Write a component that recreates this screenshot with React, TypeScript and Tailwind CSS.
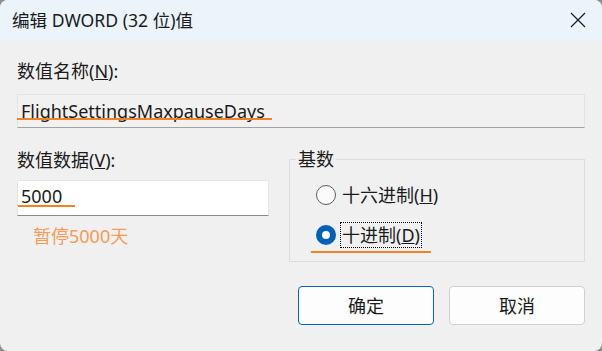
import React from 'react';

const font = { fontFamily: '"Noto Sans", "Noto Sans CJK SC", sans-serif' };

const Radio: React.FC<{ checked?: boolean }> = ({ checked }) =>
  checked ? (
    <span className="flex h-[20px] w-[20px] items-center justify-center rounded-full bg-[#005fb8]">
      <span className="h-[8px] w-[8px] rounded-full bg-white" />
    </span>
  ) : (
    <span className="h-[20px] w-[20px] rounded-full border border-[#5d5d5d] bg-[#fbfbfb]" />
  );

export default function App() {
  return (
    <div className="h-[351px] w-[602px] bg-[#8e8e8e] text-[18px] text-[#1b1b1b]" style={font}>
      <div className="flex h-full w-full flex-col overflow-hidden rounded-[8px] bg-[#f0f0f0]">
        {/* title bar */}
        <div className="flex h-[41px] shrink-0 items-center justify-between bg-[#ebf4fa] pl-[12px] pr-[16px]">
          <span className="text-[17.6px] leading-[24px] -mt-[1px]">编辑 DWORD (32 位)值</span>
          <svg width="16" height="16" viewBox="0 0 16 16" className="-mt-[2px]">
            <path d="M1 1 L15 15 M15 1 L1 15" stroke="#1b1b1b" strokeWidth="1.2" />
          </svg>
        </div>

        <div className="flex flex-col px-[17px]">
          <div className="mt-[18px] leading-[24px]">
            数值名称(<u>N</u>):
          </div>
          <div className="relative mt-[11px] flex h-[34px] items-center border border-[#e3e3e3] border-b-[#a3a3a3] bg-[#f1f1f1] px-[3px]">
            <span className="leading-[24px]">FlightSettingsMaxpauseDays</span>
            <span className="absolute -left-px top-[23px] h-[2px] w-[255px] bg-[#f58220]" />
          </div>

          <div className="flex gap-[20px]">
            <div className="flex w-[252px] flex-col">
              <div className="mt-[20px] leading-[24px]">
                数值数据(<u>V</u>):
              </div>
              <div className="relative mt-[8px] flex h-[36px] items-center border border-[#e5e5e5] border-b-[#8b8b8b] bg-white px-[3px] pb-[5px]">
                <span className="leading-[24px]">5000</span>
                <span className="absolute left-0 top-[24px] h-[2px] w-[57px] bg-[#f58220]" />
              </div>
              <div className="mt-[8px] pl-[16px] leading-[24px] text-[#f79b55]">暂停5000天</div>
            </div>

            <fieldset className="mt-[19px] w-[296px] border border-[#dcdcdc] pl-[6px] pb-[12px]">
              <legend className="px-[2px] leading-[24px]">基数</legend>
              <div className="mt-[10px] ml-[20px] flex h-[28px] items-center gap-[4px]">
                <Radio />
                <span className="border border-transparent px-[1px] leading-[24px]">
                  十六进制(<u>H</u>)
                </span>
              </div>
              <div className="relative mt-[12px] ml-[20px] flex h-[28px] items-center gap-[4px]">
                <Radio checked />
                <span className="border border-dotted border-black px-[1px] leading-[24px]">
                  十进制(<u>D</u>)
                </span>
                <span className="absolute -left-[5px] top-[30px] h-[2px] w-[120px] bg-[#f58220]" />
              </div>
            </fieldset>
          </div>

          <div className="mt-[24px] flex justify-end gap-[15px]">
            <button className="h-[39px] w-[136px] rounded-[4px] border border-[#0067c0] bg-[#fdfdfd] leading-[24px]">
              确定
            </button>
            <button className="h-[39px] w-[136px] rounded-[4px] border border-[#d0d0d0] bg-[#fdfdfd] leading-[24px]">
              取消
            </button>
          </div>
        </div>
      </div>
    </div>
  );
}
